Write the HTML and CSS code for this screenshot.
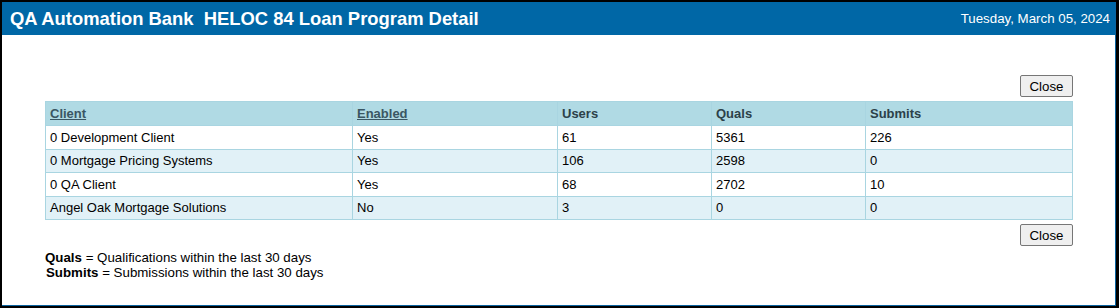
FILE: index.html
```html
<!DOCTYPE html>
<html>
<head>
<meta charset="utf-8">
<link rel="stylesheet" href="styles.css">
</head>
<body>
<div class="window">
  <div class="header">
    <div class="title">QA Automation Bank&nbsp; HELOC 84 Loan Program Detail</div>
    <div class="date">Tuesday, March 05, 2024</div>
  </div>
  <div class="content">
    <div class="btnrow top"><button class="btn">Close</button></div>
    <table class="grid">
      <colgroup>
        <col class="c1"><col class="c2"><col class="c3"><col class="c4"><col class="c5">
      </colgroup>
      <thead>
        <tr>
          <th><a href="#" class="sort">Client</a></th>
          <th><a href="#" class="sort">Enabled</a></th>
          <th>Users</th>
          <th>Quals</th>
          <th>Submits</th>
        </tr>
      </thead>
      <tbody>
        <tr><td>0 Development Client</td><td>Yes</td><td>61</td><td>5361</td><td>226</td></tr>
        <tr class="alt"><td>0 Mortgage Pricing Systems</td><td>Yes</td><td>106</td><td>2598</td><td>0</td></tr>
        <tr><td>0 QA Client</td><td>Yes</td><td>68</td><td>2702</td><td>10</td></tr>
        <tr class="alt"><td>Angel Oak Mortgage Solutions</td><td>No</td><td>3</td><td>0</td><td>0</td></tr>
      </tbody>
    </table>
    <div class="btnrow bottom"><button class="btn">Close</button></div>
    <div class="legend">
      <div><b>Quals</b> = Qualifications within the last 30 days</div>
      <div class="l2"><b>Submits</b> = Submissions within the last 30 days</div>
    </div>
  </div>
</div>
</body>
</html>
```
FILE: styles.css
```css
html, body {
  margin: 0;
  height: 100%;
}
body {
  background: #000;
  padding: 2px 3px 2px 2px;
  box-sizing: border-box;
  height: 308px;
  font-family: "Liberation Sans", Arial, sans-serif;
}
.window {
  background: #fff;
  height: 100%;
  box-sizing: border-box;
  border-right: 1px solid #0a64a0;
  border-bottom: 1px solid #0a64a0;
}
.header {
  background: #0067a6;
  height: 33px;
  display: flex;
  align-items: center;
  justify-content: space-between;
  padding: 0 5px 0 8px;
  color: #fff;
}
.title {
  font-weight: bold;
  font-size: 18.4px;
}
.date {
  font-size: 13.3px;
}
.content {
  padding: 40px 42px 0 43px;
}
.btnrow {
  display: flex;
  justify-content: flex-end;
}
.btnrow.top { margin-bottom: 4px; }
.btnrow.bottom { margin-top: 4px; }
.btn {
  font-family: "Liberation Sans", Arial, sans-serif;
  font-size: 13.3px;
  color: #000;
  background: #efefef;
  border: 1px solid #767676;
  border-radius: 2px;
  width: 53px;
  height: 22px;
  padding: 0;
}
.grid {
  width: 100%;
  border-collapse: collapse;
  font-size: 13px;
  border: 1px solid #a9d5e1;
}
.c1 { width: 307px; }
.c2 { width: 205px; }
.c3 { width: 154px; }
.c4 { width: 154px; }
.grid th, .grid td {
  border: 1px solid #a9d5e1;
  text-align: left;
  padding: 0 4px;
}
.grid td {
  height: 22.5px;
  color: #000;
}
.grid thead th {
  background: #b0dae4;
  color: #2c4149;
  font-weight: bold;
  height: 23px;
}
.grid .sort {
  color: #3a5663;
  font-weight: bold;
  text-decoration: underline;
}
.grid tr.alt td { background: #e1f1f7; }
.legend {
  margin-top: 4px;
  font-size: 13.3px;
  line-height: 15px;
  color: #000;
}
.legend .l2 { padding-left: 1px; }
```
